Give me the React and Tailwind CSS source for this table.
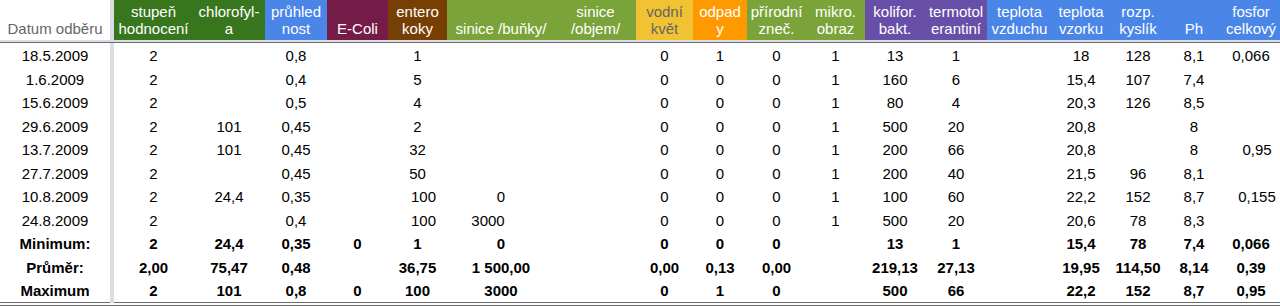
import React from "react";

const cols =
  "grid grid-cols-[114px_79px_72px_62px_61px_59px_108px_81px_57px_54px_59px_59px_60px_62px_65px_58px_56px_56px_58px]";

const headers = [
  { t: ["Datum odběru"], c: "bg-white text-[#666]" },
  { t: ["stupeň", "hodnocení"], c: "bg-[#38761d] text-white" },
  { t: ["chlorofyl-", "a"], c: "bg-[#38761d] text-white" },
  { t: ["průhled", "nost"], c: "bg-[#4a86e8] text-white" },
  { t: ["E-Coli"], c: "bg-[#741b47] text-white" },
  { t: ["entero", "koky"], c: "bg-[#783f04] text-white" },
  { t: ["sinice /buňky/"], c: "bg-[#7aa43a] text-white" },
  { t: ["sinice", "/objem/"], c: "bg-[#7aa43a] text-white" },
  { t: ["vodní", "květ"], c: "bg-[#f1c232] text-[#666]" },
  { t: ["odpad", "y"], c: "bg-[#ff9900] text-white" },
  { t: ["přírodní", "zneč."], c: "bg-[#7aa43a] text-white" },
  { t: ["mikro.", "obraz"], c: "bg-[#7aa43a] text-white" },
  { t: ["kolifor.", "bakt."], c: "bg-[#674ea7] text-white" },
  { t: ["termotol", "erantiní"], c: "bg-[#674ea7] text-white" },
  { t: ["teplota", "vzduchu"], c: "bg-[#4a86e8] text-white" },
  { t: ["teplota", "vzorku"], c: "bg-[#4a86e8] text-white" },
  { t: ["rozp.", "kyslík"], c: "bg-[#4a86e8] text-white" },
  { t: ["Ph"], c: "bg-[#4a86e8] text-white" },
  { t: ["fosfor", "celkový"], c: "bg-[#4a86e8] text-white" },
];

const rows = [
  ["18.5.2009", "2", "", "0,8", "", "1", "", "", "0", "1", "0", "1", "13", "1", "", "18", "128", "8,1", "0,066"],
  ["1.6.2009", "2", "", "0,4", "", "5", "", "", "0", "0", "0", "1", "160", "6", "", "15,4", "107", "7,4", ""],
  ["15.6.2009", "2", "", "0,5", "", "4", "", "", "0", "0", "0", "1", "80", "4", "", "20,3", "126", "8,5", ""],
  ["29.6.2009", "2", "101", "0,45", "", "2", "", "", "0", "0", "0", "1", "500", "20", "", "20,8", "", "8", ""],
  ["13.7.2009", "2", "101", "0,45", "", "32", "", "", "0", "0", "0", "1", "200", "66", "", "20,8", "", "8", ["0,95", "pl-3"]],
  ["27.7.2009", "2", "", "0,45", "", "50", "", "", "0", "0", "0", "1", "200", "40", "", "21,5", "96", "8,1", ""],
  ["10.8.2009", "2", "24,4", "0,35", "", ["100", "pl-3"], "0", "", "0", "0", "0", "1", "100", "60", "", "22,2", "152", "8,7", ["0,155", "pl-3"]],
  ["24.8.2009", "2", "", "0,4", "", ["100", "pl-3"], ["3000", "pr-[26px]"], "", "0", "0", "0", "1", "500", "20", "", "20,6", "78", "8,3", ""],
];

const summary = [
  ["Minimum:", "2", "24,4", "0,35", "0", "1", "0", "", "0", "0", "0", "", "13", "1", "", "15,4", "78", "7,4", "0,066"],
  ["Průměr:", "2,00", "75,47", "0,48", "", "36,75", "1 500,00", "", "0,00", "0,13", "0,00", "", "219,13", "27,13", "", "19,95", "114,50", "8,14", "0,39"],
  ["Maximum", "2", "101", "0,8", "0", "100", "3000", "", "0", "1", "0", "", "500", "66", "", "22,2", "152", "8,7", "0,95"],
];

const Row = ({ cells, bold }) => (
  <div className={`${cols} h-[23.5px] ${bold ? "font-bold" : ""}`}>
    {cells.map((cell, i) => {
      const [v, extra] = Array.isArray(cell) ? cell : [cell, ""];
      return (
        <div
          key={i}
          className={`flex items-center justify-center whitespace-nowrap pt-[2px] ${extra} ${
            i === 0 ? "border-r-4 border-[#dadce6]" : ""
          }`}
        >
          {v}
        </div>
      );
    })}
  </div>
);

export default function App() {
  return (
    <div className="w-[1280px] bg-white text-[15px] text-black font-['Liberation_Sans',Arial,sans-serif]">
      <div className={`${cols} h-10`}>
        {headers.map((h, i) => (
          <div
            key={i}
            className={`flex flex-col items-center justify-end pb-[3px] leading-[17px] whitespace-nowrap text-center ${h.c} ${
              i === 0 ? "border-r-4 border-[#dadce6]" : ""
            }`}
          >
            {h.t.map((line, j) => (
              <span key={j}>{line}</span>
            ))}
          </div>
        ))}
      </div>
      <div className="h-[2px] bg-[#dadce6]" />
      <div className="h-px bg-[#6b6b6b]" />
      {rows.map((r, i) => (
        <Row key={i} cells={r} />
      ))}
      {summary.map((r, i) => (
        <Row key={i} cells={r} bold />
      ))}
      <div className="h-px bg-[#6b6b6b]" />
      <div className="h-[2px] bg-white" />
      <div className="h-px bg-[#6b6b6b]" />
    </div>
  );
}
